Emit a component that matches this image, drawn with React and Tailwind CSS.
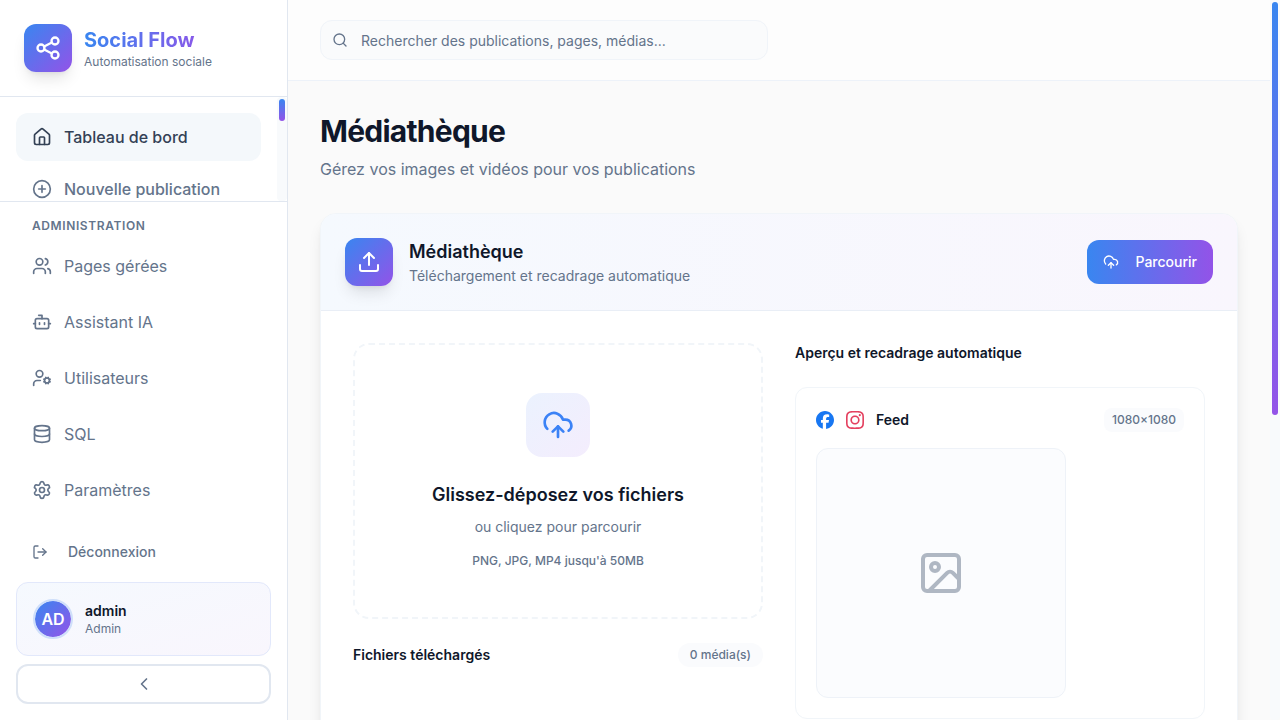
import { useId } from "react";
import {
  Bot,
  ChevronLeft,
  CirclePlus,
  CloudUpload,
  Database,
  House,
  Image,
  LogOut,
  Search,
  Settings,
  Upload,
  UserCog,
  Users,
} from "lucide-react";
import { TbShare } from "react-icons/tb";
import { SiFacebook, SiInstagram } from "react-icons/si";

const adminLinks = [
  { label: "Pages gérées", icon: Users },
  { label: "Assistant IA", icon: Bot },
  { label: "Utilisateurs", icon: UserCog },
  { label: "SQL", icon: Database },
  { label: "Paramètres", icon: Settings },
];

function ScrollTrack({ thumb }) {
  return (
    <div aria-hidden="true" className="w-2.5 shrink-0 rounded-sm bg-[#f8fafc] p-0.5">
      <div className={`rounded-full bg-linear-to-b/srgb from-[#3986f0] to-[#9353e8] ${thumb}`} />
    </div>
  );
}

function Sidebar() {
  return (
    <aside className="flex w-72 shrink-0 flex-col border-r border-[#e1e7f0] bg-white">
      <div className="flex items-center gap-3 border-b border-[#e1e7f0] p-6">
        <div className="flex size-12 shrink-0 items-center justify-center rounded-xl bg-linear-to-br/srgb from-[#3986f0] to-[#9353e8] text-white shadow-lg">
          <TbShare size={28} />
        </div>
        <div>
          <div className="bg-linear-to-r/srgb from-[#3986f0] to-[#9353e8] bg-clip-text text-xl leading-7 font-bold text-transparent">
            Social Flow
          </div>
          <p className="text-xs text-[#64748b]">Automatisation sociale</p>
        </div>
      </div>

      <div className="flex min-h-0 flex-1">
        <nav
          aria-label="Navigation principale"
          className="min-w-0 flex-1 overflow-y-auto [scrollbar-width:none]"
        >
          <div className="flex flex-col gap-1 p-4 font-medium">
            <a
              href="#tableau"
              className="flex h-12 items-center gap-3 rounded-xl bg-[#f4f8fb] px-4 text-[#334155]"
            >
              <House size={20} />
              Tableau de bord
            </a>
            <a
              href="#nouvelle"
              className="flex h-12 items-center gap-3 rounded-xl px-4 text-[#64748b]"
            >
              <CirclePlus size={20} />
              Nouvelle publication
            </a>
          </div>
        </nav>
        <ScrollTrack thumb="h-[22%]" />
      </div>

      <div className="flex flex-col border-t border-[#e1e7f0] p-4 text-[#64748b]">
        <h2 className="px-4 text-xs font-semibold tracking-wider uppercase">
          Administration
        </h2>
        <nav aria-label="Administration" className="flex flex-col gap-2 pt-2">
          {adminLinks.map(({ label, icon: Icon }) => (
            <a
              key={label}
              href="#admin"
              className="flex h-12 items-center gap-3 rounded-xl px-4"
            >
              <Icon size={20} />
              {label}
            </a>
          ))}
        </nav>
        <button
          type="button"
          className="mt-4 flex h-11 items-center gap-5 rounded-xl px-4 text-sm font-medium"
        >
          <LogOut size={16} />
          Déconnexion
        </button>
        <div className="mt-2 flex items-center gap-3 rounded-xl border border-[#e2e8fb] bg-linear-to-br/srgb from-[#f5f9fe] to-[#f9f6fd] p-4">
          <div className="flex size-10 items-center justify-center rounded-full border-2 border-[#cfdffa] bg-linear-to-br/srgb from-[#3986f0] to-[#9353e8] bg-clip-padding font-semibold text-white">
            AD
          </div>
          <div>
            <p className="text-sm font-semibold text-[#0f172a]">admin</p>
            <p className="text-xs">Admin</p>
          </div>
        </div>
        <button
          type="button"
          aria-label="Réduire le menu"
          className="mt-2 flex h-10 items-center justify-center rounded-xl border-2 border-[#e1e7f0] bg-white"
        >
          <ChevronLeft size={20} />
        </button>
      </div>
    </aside>
  );
}

function Header() {
  const id = useId();
  return (
    <header className="sticky top-0 z-10 border-b border-[#edf2f9] bg-[#fdfdfd] px-8 py-5">
      <div className="relative max-w-md text-[#64748b]">
        <label
          htmlFor={id}
          aria-label="Rechercher"
          className="absolute inset-y-0 left-3 flex items-center"
        >
          <Search size={16} />
        </label>
        <input
          id={id}
          type="text"
          placeholder="Rechercher des publications, pages, médias..."
          className="block h-10 w-full rounded-xl border border-[#f0f4f9] bg-[#fafbfc] py-2 pr-3 pl-10 text-sm outline-none placeholder:text-[#64748b]"
        />
      </div>
    </header>
  );
}

function DropZone() {
  return (
    <button
      type="button"
      className="flex w-full flex-col items-center rounded-2xl border-2 border-dashed border-[#f1f5f9] p-12"
    >
      <span className="flex size-16 items-center justify-center rounded-2xl bg-linear-to-br/srgb from-[#ebf2fe] to-[#f4edfd] text-[#3b82f6]">
        <CloudUpload size={32} />
      </span>
      <span className="mt-6 text-lg leading-7 font-semibold text-[#0f172a]">
        Glissez-déposez vos fichiers
      </span>
      <span className="mt-2 text-sm text-[#64748b]">ou cliquez pour parcourir</span>
      <span className="mt-4 text-xs font-medium text-[#64748b]">
        PNG, JPG, MP4 jusqu'à 50MB
      </span>
    </button>
  );
}

function MediaCard() {
  return (
    <section className="overflow-hidden rounded-2xl border border-[#f1f5f9] bg-white shadow-lg">
      <div className="flex items-center justify-between border-b border-[#e9eef6] bg-linear-to-r/srgb from-[#f5f9fe] to-[#f9f6fd] p-6">
        <div className="flex items-center gap-4">
          <div className="flex size-12 items-center justify-center rounded-xl bg-linear-to-br/srgb from-[#3986f0] to-[#9353e8] text-white shadow-lg">
            <Upload size={24} />
          </div>
          <div>
            <h2 className="text-lg leading-7 font-semibold text-[#0f172a]">Médiathèque</h2>
            <p className="text-sm text-[#64748b]">Téléchargement et recadrage automatique</p>
          </div>
        </div>
        <button
          type="button"
          className="flex h-11 items-center gap-4 rounded-xl bg-linear-to-r/srgb from-[#3986f0] to-[#9353e8] px-4 text-sm font-medium text-white"
        >
          <CloudUpload size={16} />
          Parcourir
        </button>
      </div>

      <div className="grid grid-cols-2 gap-8 p-8">
        <div className="flex flex-col gap-6">
          <DropZone />
          <div className="flex items-center justify-between">
            <h3 className="text-sm font-semibold text-[#0f172a]">Fichiers téléchargés</h3>
            <span className="rounded-full bg-[#fafbfd] px-3 py-1 text-xs font-medium text-[#64748b]">
              0 média(s)
            </span>
          </div>
        </div>

        <div className="flex flex-col gap-6">
          <h3 className="text-sm font-semibold text-[#0f172a]">
            Aperçu et recadrage automatique
          </h3>
          <div className="flex flex-col gap-4 rounded-xl border border-[#f1f5f9] p-5">
            <div className="flex items-center justify-between">
              <div className="flex items-center gap-3">
                <SiFacebook size={18} className="text-[#1877f2]" />
                <SiInstagram size={18} className="text-[#e4405f]" />
                <h4 className="text-sm font-semibold text-[#0f172a]">Feed</h4>
              </div>
              <span className="rounded-lg bg-[#fafbfd] px-2 py-1 text-xs font-medium text-[#64748b]">
                1080×1080
              </span>
            </div>
            <div className="flex aspect-square w-full max-w-[250px] items-center justify-center rounded-xl border border-[#eef2f8] bg-[#fbfcfe] text-[#afb7c3]">
              <Image size={48} />
            </div>
          </div>
        </div>
      </div>
    </section>
  );
}

export default function App() {
  return (
    <div className="flex h-screen bg-[#fafafa] font-[Inter,sans-serif] text-base">
      <Sidebar />
      <div className="min-w-0 flex-1 overflow-y-auto [scrollbar-width:none]">
        <Header />
        <main className="flex flex-col gap-8 p-8">
          <div>
            <h1 className="text-3xl leading-9 font-bold tracking-tight text-[#0f172a]">
              Médiathèque
            </h1>
            <p className="mt-2 text-[#64748b]">
              Gérez vos images et vidéos pour vos publications
            </p>
          </div>
          <MediaCard />
        </main>
      </div>
      <ScrollTrack thumb="h-[57.7%]" />
    </div>
  );
}
